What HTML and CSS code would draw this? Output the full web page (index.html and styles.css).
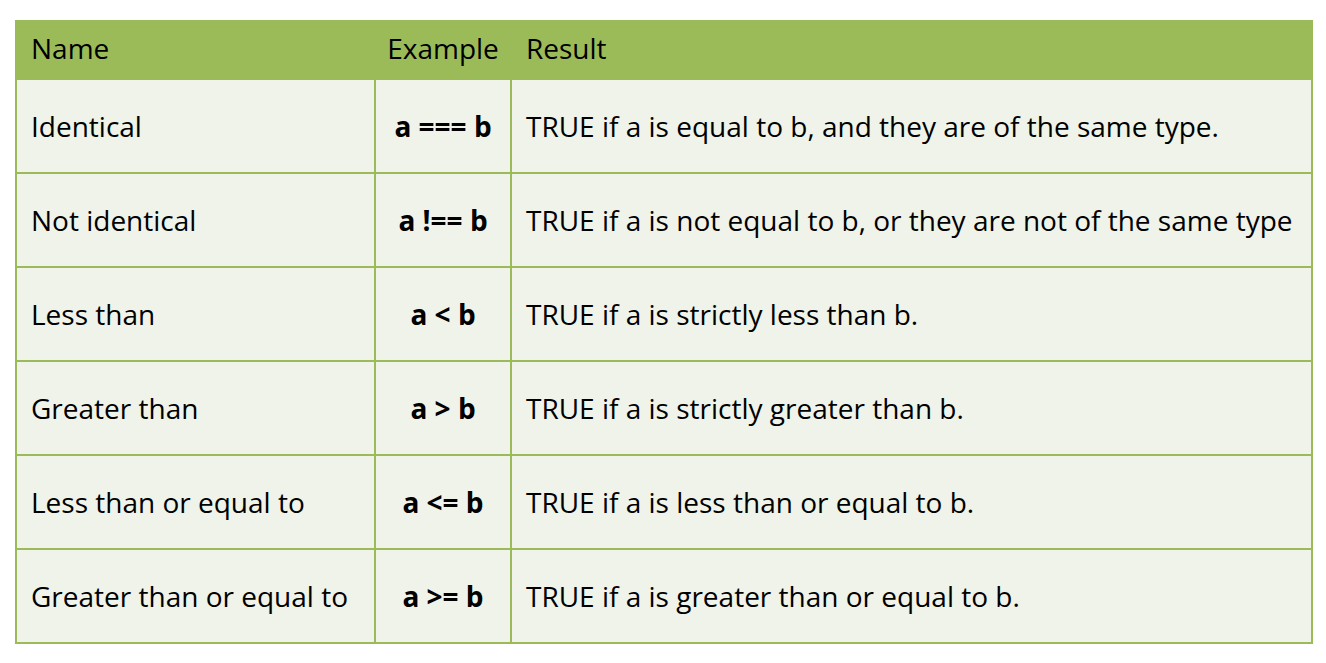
FILE: index.html
```html
<!DOCTYPE html>
<html lang="en">
<head>
<meta charset="utf-8">
<title>Comparison operators</title>
<link rel="stylesheet" href="styles.css">
</head>
<body>
<div class="table">
  <div class="cell head">Name</div>
  <div class="cell head center">Example</div>
  <div class="cell head">Result</div>

  <div class="cell">Identical</div>
  <div class="cell code">a === b</div>
  <div class="cell">TRUE if a is equal to b, and they are of the same type.</div>

  <div class="cell">Not identical</div>
  <div class="cell code">a !== b</div>
  <div class="cell">TRUE if a is not equal to b, or they are not of the same type</div>

  <div class="cell">Less than</div>
  <div class="cell code">a &lt; b</div>
  <div class="cell">TRUE if a is strictly less than b.</div>

  <div class="cell">Greater than</div>
  <div class="cell code">a &gt; b</div>
  <div class="cell">TRUE if a is strictly greater than b.</div>

  <div class="cell">Less than or equal to</div>
  <div class="cell code">a &lt;= b</div>
  <div class="cell">TRUE if a is less than or equal to b.</div>

  <div class="cell">Greater than or equal to</div>
  <div class="cell code">a &gt;= b</div>
  <div class="cell">TRUE if a is greater than or equal to b.</div>
</div>
</body>
</html>
```
FILE: styles.css
```css
html, body {
  margin: 0;
  padding: 0;
  background: #ffffff;
}

body {
  padding: 20px 0 0 15px;
  font-family: "Open Sans", Lato, sans-serif;
  color: #000000;
}

.table {
  width: 1298px;
  box-sizing: border-box;
  display: grid;
  grid-template-columns: 357px 134px 1fr;
  grid-template-rows: 58px repeat(6, 92px);
  gap: 2px;
  padding: 0 2px 2px 2px;
  background: #9bbb59;
}

.cell {
  display: flex;
  align-items: center;
  padding-left: 14px;
  background: #eff3ea;
  font-size: 28px;
  line-height: 1;
  white-space: nowrap;
}

.cell.head {
  background: #9bbb59;
  padding-bottom: 2px;
}

.cell.center {
  justify-content: center;
  padding-left: 0;
}

.cell.code {
  justify-content: center;
  padding-left: 0;
  font-weight: 700;
}
```
